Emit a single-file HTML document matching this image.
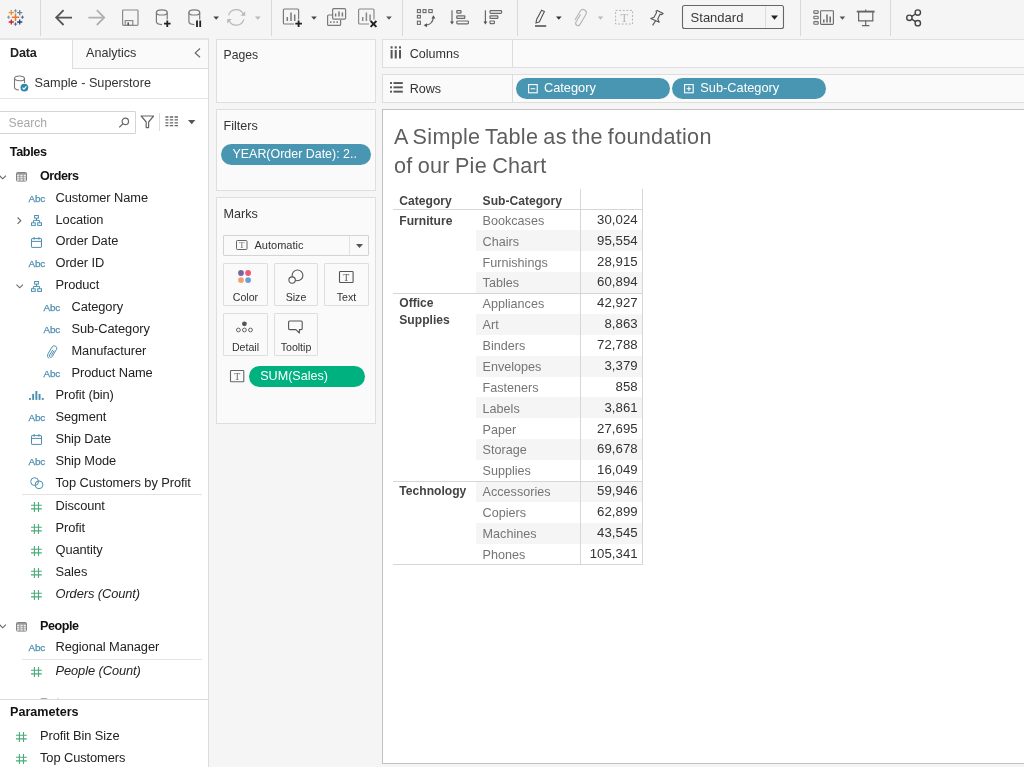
<!DOCTYPE html>
<html lang="en">
<head>
<meta charset="utf-8">
<title>Tableau - A Simple Table</title>
<style>
*{box-sizing:border-box;margin:0;padding:0}
html,body{width:1024px;height:767px;overflow:hidden;background:#f5f5f5;font-family:"Liberation Sans",sans-serif;color:#333;font-size:13px}
.abs{position:absolute}
#app{position:relative;width:1024px;height:767px;overflow:hidden;will-change:transform}
.card{position:absolute;background:#fafafa;border:1px solid #dedede}
.t{position:absolute;white-space:nowrap;line-height:16px}
.pill{position:absolute;border-radius:10px;color:#fff;font-size:13px;line-height:20px;height:20px;white-space:nowrap;overflow:hidden}
.blue{background:#4996b2}
.green{background:#00b180}
svg{position:absolute;overflow:visible}
.vsep{position:absolute;width:1px;background:#dcdcdc;top:0;height:36px}
/* data pane */
#pane{position:absolute;left:0;top:38px;width:209px;height:729px;background:#fff;border-right:1px solid #dcdcdc;border-top:2px solid #e6e6e6}
.f{position:absolute;white-space:nowrap;color:#222}
.f.i{font-style:italic}
.f.l2{left:71px}
.abc{position:absolute;color:#4e8fb0;letter-spacing:-0.200px;-webkit-text-stroke:0.250px #4e8fb0}
.hsep{position:absolute;height:1px;background:#e3e3e3}
/* table */
.th{position:absolute;font-size:12px;font-weight:bold;color:#333;line-height:14px;white-space:nowrap}
.sc{position:absolute;left:482px;font-size:12.5px;color:#777;line-height:14px;white-space:nowrap}
.val{position:absolute;right:386px;font-size:12.5px;color:#333;line-height:14px;white-space:nowrap;text-align:right}
.band{position:absolute;left:476px;width:166px;height:21px;background:#f5f5f5}

.lab{font-size:12.200px;color:#333}
.mbtn{position:absolute;height:43px;border:1px solid #dedede;border-radius:1px;background:#fafafa}
.mbtn span{position:absolute;left:0;width:100%;text-align:center;top:26.500px;font-size:10.600px;line-height:13px;color:#333}
.title{color:#5e5e5e;letter-spacing:0.300px;word-spacing:-1.200px}
</style>
</head>
<body>
<div id="app">
<!-- TOOLBAR -->
<div id="toolbar" class="abs" style="left:0;top:0;width:1024px;height:39px;background:#f5f5f5">
<svg id="tb" width="1024" height="39" viewBox="0 0 1024 39" style="left:0;top:0" fill="none" stroke-linecap="butt">
<g stroke="#d9d9d9" stroke-width="1">
<path d="M40.5 0V36M271.5 0V36M402.5 0V36M517.5 0V36M800.5 0V36M890.5 0V36"/>
</g>
<!-- logo -->
<g stroke-width="1.3">
<path d="M15.5 13.5v7.4M11.8 17.2h7.4" stroke="#e8762d" stroke-width="1.5"/>
<path d="M11.3 10v5.2M8.7 12.6h5.2" stroke="#eb912c"/>
<path d="M19.7 10v5.2M17.1 12.6h5.2" stroke="#59879b"/>
<path d="M11.3 19.4v5.2M8.7 22h5.2" stroke="#c72035"/>
<path d="M19.7 19.4v5.2M17.1 22h5.2" stroke="#1f447e"/>
<path d="M15.5 9.2v3.4M13.8 10.9h3.4" stroke="#7099a6" stroke-width="1"/>
<path d="M15.5 22.4v3.4M13.8 24.1h3.400" stroke="#5c6692" stroke-width="1"/>
<path d="M8.6 15.6v3.2M7 17.2h3.200" stroke="#7099a6" stroke-width="1"/>
<path d="M22.4 15.6v3.200M20.800 17.2h3.200" stroke="#5c6692" stroke-width="1"/>
</g>
<!-- back / forward -->
<path d="M72 17.6H56.400M63.600 10.200L56.200 17.600L63.600 25" stroke="#555" stroke-width="1.800"/>
<path d="M88.400 17.600H104M96.800 10.200L104.200 17.600L96.800 25" stroke="#b0b0b0" stroke-width="1.800"/>
<!-- save -->
<g stroke="#8a8a8a" stroke-width="1.200">
<rect x="122.600" y="10" width="15.400" height="15.400" rx="0.800"/>
<rect x="125.200" y="20.600" width="7.600" height="4.800"/>
<rect x="127.400" y="22.400" width="1.600" height="3" fill="#555" stroke="none"/>
</g>
<!-- db plus -->
<g stroke="#7a7a7a" stroke-width="1.200">
<ellipse cx="161.800" cy="12.400" rx="5.400" ry="2.600"/>
<path d="M156.400 12.400V21.800C156.400 23.200 158.400 24.400 162 24.600M167.200 12.400V19.600"/>
<path d="M167.300 20.400v6.600M164 23.700h6.600" stroke="#222" stroke-width="1.800"/>
</g>
<!-- db pause -->
<g stroke="#7a7a7a" stroke-width="1.200">
<ellipse cx="194.300" cy="12.400" rx="5.400" ry="2.600"/>
<path d="M188.900 12.400V21.800C188.900 23.200 190.900 24.400 194.300 24.600M199.700 12.400V19.600"/>
<path d="M197 20.600v6.400M200.200 20.600v6.400" stroke="#222" stroke-width="1.800"/>
</g>
<path d="M213.400 16.600h5.600l-2.800 3.200z" fill="#444" stroke="none"/>
<!-- refresh -->
<g stroke="#b9b9b9" stroke-width="1.200">
<path d="M228.600 15.400A7.800 7.800 0 0 1 243.400 14.600M243.800 19.400A7.800 7.800 0 0 1 229 20.200"/>
<path d="M245.200 11.200v4.600h-4.600zM227.200 23.600v-4.600h4.600z" fill="#b9b9b9" stroke="none"/>
</g>
<path d="M255 16.600h5.600l-2.800 3.200z" fill="#b9b9b9" stroke="none"/>
<!-- new worksheet -->
<g stroke="#7a7a7a" stroke-width="1.200">
<path d="M294 24H284.400a1 1 0 0 1-1-1V10a1 1 0 0 1 1-1H297.600a1 1 0 0 1 1 1V19.600"/>
<path d="M287.300 17v4M291 12.600v8.400M294.700 14.600v6.400" stroke-width="1.500"/>
<path d="M298.600 20.400v6.600M295.300 23.700h6.600" stroke="#222" stroke-width="1.800"/>
</g>
<path d="M311.200 16.600h5.600l-2.800 3.200z" fill="#444" stroke="none"/>
<!-- duplicate -->
<g stroke="#7a7a7a" stroke-width="1.200">
<path d="M332 15H328.600a1 1 0 0 0-1 1V24.400a1 1 0 0 0 1 1H339.600a1 1 0 0 0 1-1V20"/>
<rect x="332.600" y="8.700" width="13" height="10.400" rx="1"/>
<path d="M335.600 13.600v3M339 11.400v5.200M342.400 12.600v4" stroke-width="1.500"/>
<path d="M330.800 21.200v1.800M334 21.200v1.800M337.200 21.200v1.800" stroke-width="1.400"/>
</g>
<!-- clear sheet -->
<g stroke="#8a8a8a" stroke-width="1.200">
<path d="M369 24H359.600a1 1 0 0 1-1-1V10a1 1 0 0 1 1-1H373a1 1 0 0 1 1 1V19.600"/>
<path d="M362.700 17v4M366.400 12.600v8.400M370.100 14.600v6.400" stroke-width="1.500"/>
<path d="M370.600 21l5.800 5.800M376.400 21l-5.800 5.800" stroke="#222" stroke-width="1.900"/>
</g>
<path d="M386.200 16.600h5.600l-2.800 3.200z" fill="#555" stroke="none"/>
<!-- swap -->
<g stroke="#6a6a6a" stroke-width="1.100">
<rect x="417.400" y="9.600" width="3" height="3"/><rect x="423" y="9.600" width="3" height="3"/><rect x="428.800" y="9.600" width="3.400" height="3"/>
<rect x="417.400" y="15.400" width="3" height="2.600"/><rect x="417.400" y="21.200" width="3" height="3.200"/>
<path d="M425.400 25.200C430 24.800 433 21.600 433.400 17.200" stroke-width="1.300"/>
<path d="M423.600 25.200l3.400-2v4zM433.400 15.200l-2 3.400h4z" fill="#555" stroke="none"/>
</g>
<!-- sort asc -->
<g stroke="#6a6a6a" stroke-width="1.200">
<path d="M452 10.200V22.600"/><path d="M450 21.400h4l-2 3.200z" fill="#555" stroke="none"/>
<rect x="456.800" y="10.600" width="4.200" height="2.600" rx="0.500"/>
<rect x="456.800" y="15.800" width="8" height="2.600" rx="0.500"/>
<rect x="456.800" y="21" width="11.600" height="2.800" rx="0.800"/>
</g>
<!-- sort desc -->
<g stroke="#6a6a6a" stroke-width="1.200">
<path d="M485.400 10.200V22.600"/><path d="M483.400 21.400h4l-2 3.200z" fill="#555" stroke="none"/>
<rect x="490" y="10.600" width="11.600" height="2.800" rx="0.800"/>
<rect x="490" y="15.800" width="7.800" height="2.600" rx="0.500"/>
<rect x="490" y="21" width="4.400" height="2.600" rx="0.500"/>
</g>
<!-- highlighter -->
<g stroke="#555" stroke-width="1.100">
<path d="M541.600 10.200l2.800 1.400-5 10.200-3.400 1.200 0.600-3.600z"/>
<path d="M535 26h11.200" stroke-width="1.600"/>
</g>
<path d="M556 16.600h5.600l-2.800 3.200z" fill="#333" stroke="none"/>
<!-- paperclip -->
<g stroke="#b5b5b5" stroke-width="1.100">
<path d="M580.600 14.400l-4.600 7.600a2.300 2.300 0 0 0 4 2.400l6-10.200a3.300 3.300 0 0 0-5.600-3.400l-5.400 9.200"/>
</g>
<path d="M597.800 16.600h5.400l-2.700 3.200z" fill="#b9b9b9" stroke="none"/>
<!-- T dashed -->
<rect x="615.600" y="10.400" width="17" height="13.600" stroke="#b5b5b5" stroke-width="1" stroke-dasharray="2 1.600"/>
<text x="624.200" y="21.600" font-family="Liberation Serif,serif" font-size="12.500" fill="#b5b5b5" stroke="none" text-anchor="middle">T</text>
<!-- pin -->
<g stroke="#555" stroke-width="1.100" stroke-linejoin="round">
<path d="M657.200 10.400l6 3-1.400 1.200-1.800-0.400-2.200 4.800 1.400 3.200-8.400-3.600 3.200-1.400 2.600-4.600-0.600-1.400z"/>
<path d="M655.600 20.800l-3 4.600"/>
</g>
<!-- Standard box -->
<rect x="682.500" y="5.500" width="101" height="23" rx="2" fill="#f5f5f5" stroke="#666" stroke-width="1.100"/>
<path d="M765.500 6.500v21" stroke="#dcdcdc" stroke-width="1"/>
<text x="690.600" y="21.800" font-family="Liberation Sans,sans-serif" font-size="13" fill="#3a3a3a" stroke="none">Standard</text>
<path d="M771 15.600h7l-3.500 4.200z" fill="#222" stroke="none"/>
<!-- show me -->
<g stroke="#6a6a6a" stroke-width="1.100">
<rect x="813.800" y="10.800" width="4.400" height="2.600" rx="0.800"/><rect x="813.800" y="16.200" width="4.400" height="2.600" rx="0.800"/><rect x="813.800" y="21.600" width="4.400" height="2.600" rx="0.800"/>
<rect x="820.600" y="10.800" width="12.800" height="13.600" rx="0.800"/>
<path d="M823.800 19.600v3M827 14.400v8.200M830.200 16.400v6.200" stroke-width="1.500"/>
</g>
<path d="M839.600 16.600h5.600l-2.800 3.200z" fill="#555" stroke="none"/>
<!-- presentation -->
<g stroke="#666" stroke-width="1.200">
<path d="M856.800 11.600h17.800" stroke-width="1.900"/>
<path d="M865.700 9.400v2"/>
<path d="M858.600 12v8.800h14.200V12"/>
<path d="M865.700 20.800v4.600M862 25.600h7.400"/>
</g>
<!-- share -->
<g stroke="#444" stroke-width="1.400">
<circle cx="917.800" cy="12.600" r="2.700"/><circle cx="909.400" cy="17.800" r="2.700"/><circle cx="917.800" cy="23.200" r="2.700"/>
<path d="M911.800 16.400l3.700-2.400M911.800 19.200l3.700 2.500"/>
</g>
</svg>
</div>

<!-- DATA PANE -->
<div id="pane">
<div class="abs" style="left:72px;top:0;width:136px;height:28.7px;background:#fafafa;border-left:1px solid #dedede;border-bottom:1px solid #dedede"></div>
<span class="t" style="left:10px;top:4.634px;font-size:12.6px;line-height:16.0px;font-weight:bold;letter-spacing:-0.200px;color:#222">Data</span>
<span class="t" style="left:86px;top:4.634px;font-size:12.6px;line-height:16.0px;color:#333">Analytics</span>
<svg width="8" height="10" style="left:194px;top:8px" fill="none" stroke="#666" stroke-width="1.200"><path d="M6 0.500L1.200 4.900L6 9.300"/></svg>
<svg width="14" height="16" style="left:13px;top:35px" fill="none" stroke="#777" stroke-width="1.100"><ellipse cx="6.500" cy="3.400" rx="5" ry="2.400"/><path d="M1.500 3.400V12.600C1.500 13.800 3.200 14.800 6 15M11.500 3.400V8"/><circle cx="11.400" cy="12.600" r="3.900" fill="#2e86ab" stroke="none"/><path d="M9.500 12.700l1.400 1.400 2.500-2.800" stroke="#fff" stroke-width="1.100"/></svg>
<span class="t" style="left:34.6px;top:34.599000000000004px;font-size:12.7px;line-height:16.0px;color:#333">Sample - Superstore</span>
<div class="hsep" style="left:0;top:58.2px;width:208px;background:#e6e6e6"></div>
<div class="abs" style="left:-1px;top:70.5px;width:137px;height:23.500px;border:1px solid #d4d4d4;border-radius:1px;background:#fff"></div>
<span class="t" style="left:8.5px;top:74.773px;font-size:12.2px;line-height:16.0px;color:#a8a8a8">Search</span>
<svg width="12" height="12" style="left:118px;top:76.8px" fill="none" stroke="#666" stroke-width="1.200"><circle cx="7.300" cy="4.400" r="3.200"/><path d="M5 6.800L1.200 10.400"/></svg>
<svg width="16" height="14" style="left:140px;top:75.3px" fill="none" stroke="#666" stroke-width="1.200" stroke-linejoin="round"><path d="M1.200 1h12.400L8.600 7v5.600H6.200V7z"/></svg>
<div class="abs" style="left:159px;top:72.5px;width:1px;height:18px;background:#dcdcdc"></div>
<svg width="14" height="11" style="left:165px;top:76.4px" fill="none" stroke="#666" stroke-width="1.300"><path d="M0.400 1h3M4.800 1h3.400M9.600 1h3.400M0.400 3.900h3M4.800 3.900h3.400M9.600 3.900h3.400M0.400 6.800h3M4.800 6.800h3.400M9.600 6.800h3.400M0.400 9.700h3M4.800 9.700h3.400M9.600 9.700h3.400"/></svg>
<svg width="8" height="5" style="left:188px;top:79.7px"><path d="M0 0h7.400L3.700 4.200z" fill="#555"/></svg>
<span class="t" style="left:9.7px;top:103.63399999999999px;font-size:12.6px;line-height:16.0px;font-weight:bold;letter-spacing:-0.320px;color:#111">Tables</span>
<svg width="8" height="5" style="left:-1.5px;top:134.8px" fill="none" stroke="#666" stroke-width="1.100"><path d="M0.500 0.600L3.700 3.800L6.900 0.600"/></svg>
<svg width="11" height="10" style="left:15.5px;top:132px" fill="none" stroke="#777" stroke-width="0.900"><rect x="0.500" y="0.500" width="10" height="8.600" rx="0.800"/><path d="M0.500 2.700h10M0.500 4.800h10M0.500 6.900h10M3.800 2.700v6.400M7.200 2.700v6.400" stroke-width="0.700"/><path d="M0.500 1.500h10" stroke-width="1.100" stroke="#999"/></svg>
<span class="t" style="left:40px;top:127.63399999999999px;font-size:12.6px;line-height:16.0px;font-weight:bold;letter-spacing:-0.450px;color:#111">Orders</span>
<span class="abc" style="left:28.6px;top:152.57px;font-size:9.9px;line-height:12.0px;">Abc</span>
<span class="f" style="left:55.5px;top:149.547px;font-size:12.85px;line-height:16.0px;letter-spacing:-0.080px">Customer Name</span>
<svg width="11" height="11" style="left:31px;top:174.82px" fill="none" stroke="#4e8fb0" stroke-width="1"><rect x="3.600" y="0.500" width="3.800" height="2.600"/><rect x="0.500" y="7.800" width="3.800" height="2.600"/><rect x="6.700" y="7.800" width="3.800" height="2.600"/><path d="M5.500 3.100v2.300M2.400 7.800V5.400h6.200v2.400"/></svg>
<span class="f" style="left:55.5px;top:171.547px;font-size:12.85px;line-height:16.0px;letter-spacing:-0.080px">Location</span>
<svg width="5" height="8" style="left:17px;top:176.82000000000002px" fill="none" stroke="#666" stroke-width="1.100"><path d="M0.600 0.500L3.800 3.700L0.600 6.900"/></svg>
<svg width="11" height="11" style="left:31px;top:196.64px" fill="none" stroke="#4e8fb0" stroke-width="1"><rect x="0.500" y="1.600" width="10" height="8.800" rx="0.500"/><path d="M0.500 4.400h10M3.100 0v2.600M7.900 0v2.600"/></svg>
<span class="f" style="left:55.5px;top:192.547px;font-size:12.85px;line-height:16.0px;letter-spacing:-0.080px">Order Date</span>
<span class="abc" style="left:28.6px;top:217.57px;font-size:9.9px;line-height:12.0px;">Abc</span>
<span class="f" style="left:55.5px;top:214.547px;font-size:12.85px;line-height:16.0px;letter-spacing:-0.080px">Order ID</span>
<svg width="11" height="11" style="left:31px;top:240.58px" fill="none" stroke="#4e8fb0" stroke-width="1"><rect x="3.600" y="0.500" width="3.800" height="2.600"/><rect x="0.500" y="7.800" width="3.800" height="2.600"/><rect x="6.700" y="7.800" width="3.800" height="2.600"/><path d="M5.500 3.100v2.300M2.400 7.800V5.400h6.200v2.400"/></svg>
<span class="f" style="left:55.5px;top:236.54700000000003px;font-size:12.85px;line-height:16.0px;letter-spacing:-0.080px">Product</span>
<svg width="8" height="5" style="left:15.5px;top:244.28px" fill="none" stroke="#666" stroke-width="1.100"><path d="M0.500 0.600L3.700 3.800L6.900 0.600"/></svg>
<span class="abc" style="left:43.6px;top:261.57px;font-size:9.9px;line-height:12.0px;">Abc</span>
<span class="f" style="left:71.5px;top:258.547px;font-size:12.85px;line-height:16.0px;letter-spacing:-0.080px">Category</span>
<span class="abc" style="left:43.6px;top:283.57px;font-size:9.9px;line-height:12.0px;">Abc</span>
<span class="f" style="left:71.5px;top:280.547px;font-size:12.85px;line-height:16.0px;letter-spacing:-0.080px">Sub-Category</span>
<svg width="11" height="13" style="left:46.9px;top:305.54px" fill="none" stroke="#4e8fb0" stroke-width="1"><path d="M5.800 3.800l-3.200 5.200a1.500 1.500 0 0 0 2.600 1.600l4.200-7a2.500 2.500 0 0 0-4.300-2.600l-4.200 7a3.500 3.500 0 0 0 1 4.400"/><path d="M7.200 4.600l-3 5"/></svg>
<span class="f" style="left:71.5px;top:302.547px;font-size:12.85px;line-height:16.0px;letter-spacing:-0.080px">Manufacturer</span>
<span class="abc" style="left:43.6px;top:327.57px;font-size:9.9px;line-height:12.0px;">Abc</span>
<span class="f" style="left:71.5px;top:324.547px;font-size:12.85px;line-height:16.0px;letter-spacing:-0.080px">Product Name</span>
<svg width="15" height="9" style="left:28.8px;top:350.98px" fill="#4e8fb0"><rect x="0" y="7" width="1.900" height="1.900"/><rect x="3.200" y="2.900" width="1.900" height="6"/><rect x="6.400" y="0" width="1.900" height="8.900"/><rect x="9.600" y="2.900" width="1.900" height="6"/><rect x="12.800" y="7" width="1.900" height="1.900"/></svg>
<span class="f" style="left:55.5px;top:346.547px;font-size:12.85px;line-height:16.0px;letter-spacing:-0.080px">Profit (bin)</span>
<span class="abc" style="left:28.6px;top:371.57px;font-size:9.9px;line-height:12.0px;">Abc</span>
<span class="f" style="left:55.5px;top:368.547px;font-size:12.85px;line-height:16.0px;letter-spacing:-0.080px">Segment</span>
<svg width="11" height="11" style="left:31px;top:393.92px" fill="none" stroke="#4e8fb0" stroke-width="1"><rect x="0.500" y="1.600" width="10" height="8.800" rx="0.500"/><path d="M0.500 4.400h10M3.100 0v2.600M7.900 0v2.600"/></svg>
<span class="f" style="left:55.5px;top:390.547px;font-size:12.85px;line-height:16.0px;letter-spacing:-0.080px">Ship Date</span>
<span class="abc" style="left:28.6px;top:415.57px;font-size:9.9px;line-height:12.0px;">Abc</span>
<span class="f" style="left:55.5px;top:412.547px;font-size:12.85px;line-height:16.0px;letter-spacing:-0.080px">Ship Mode</span>
<svg width="14" height="13" style="left:29.5px;top:437.16px" fill="none" stroke="#4e8fb0" stroke-width="1"><circle cx="4.600" cy="4.600" r="3.900"/><circle cx="9" cy="7.800" r="3.900"/></svg>
<span class="f" style="left:55.5px;top:434.547px;font-size:12.85px;line-height:16.0px;letter-spacing:-0.080px">Top Customers by Profit</span>
<div class="hsep" style="left:22px;top:454px;width:180px"></div>
<svg width="11" height="10" style="left:31px;top:461.85px" fill="none" stroke="#4aab7b" stroke-width="1.100"><path d="M3.400 0v10M7.500 0v10M0 3.200h10.800M0 6.900h10.800"/></svg>
<span class="f" style="left:55.5px;top:457.547px;font-size:12.85px;line-height:16.0px;letter-spacing:-0.080px">Discount</span>
<svg width="11" height="10" style="left:31px;top:483.85px" fill="none" stroke="#4aab7b" stroke-width="1.100"><path d="M3.400 0v10M7.500 0v10M0 3.200h10.800M0 6.900h10.800"/></svg>
<span class="f" style="left:55.5px;top:479.547px;font-size:12.85px;line-height:16.0px;letter-spacing:-0.080px">Profit</span>
<svg width="11" height="10" style="left:31px;top:505.75px" fill="none" stroke="#4aab7b" stroke-width="1.100"><path d="M3.400 0v10M7.500 0v10M0 3.200h10.800M0 6.900h10.800"/></svg>
<span class="f" style="left:55.5px;top:501.547px;font-size:12.85px;line-height:16.0px;letter-spacing:-0.080px">Quantity</span>
<svg width="11" height="10" style="left:31px;top:527.65px" fill="none" stroke="#4aab7b" stroke-width="1.100"><path d="M3.400 0v10M7.500 0v10M0 3.200h10.800M0 6.900h10.800"/></svg>
<span class="f" style="left:55.5px;top:523.547px;font-size:12.85px;line-height:16.0px;letter-spacing:-0.080px">Sales</span>
<svg width="11" height="10" style="left:31px;top:549.60px" fill="none" stroke="#4aab7b" stroke-width="1.100"><path d="M3.400 0v10M7.500 0v10M0 3.200h10.800M0 6.900h10.800"/></svg>
<span class="f i" style="left:55.5px;top:545.547px;font-size:12.85px;line-height:16.0px;letter-spacing:-0.080px">Orders (Count)</span>
<svg width="8" height="5" style="left:-1.5px;top:584.4px" fill="none" stroke="#666" stroke-width="1.100"><path d="M0.500 0.600L3.700 3.800L6.900 0.600"/></svg>
<svg width="11" height="10" style="left:15.5px;top:581.6px" fill="none" stroke="#777" stroke-width="0.900"><rect x="0.500" y="0.500" width="10" height="8.600" rx="0.800"/><path d="M0.500 2.700h10M0.500 4.800h10M0.500 6.900h10M3.800 2.700v6.400M7.200 2.700v6.400" stroke-width="0.700"/><path d="M0.500 1.500h10" stroke-width="1.100" stroke="#999"/></svg>
<span class="t" style="left:40px;top:577.634px;font-size:12.6px;line-height:16.0px;font-weight:bold;letter-spacing:-0.450px;color:#111">People</span>
<span class="abc" style="left:28.6px;top:601.57px;font-size:9.9px;line-height:12.0px;">Abc</span>
<span class="f" style="left:55.5px;top:598.547px;font-size:12.85px;line-height:16.0px;letter-spacing:-0.080px">Regional Manager</span>
<div class="hsep" style="left:22px;top:619px;width:180px"></div>
<svg width="11" height="10" style="left:31px;top:626.60px" fill="none" stroke="#4aab7b" stroke-width="1.100"><path d="M3.400 0v10M7.500 0v10M0 3.200h10.800M0 6.900h10.800"/></svg>
<span class="f i" style="left:55.5px;top:622.547px;font-size:12.85px;line-height:16.0px;letter-spacing:-0.080px">People (Count)</span>
<div class="abs" style="left:0;top:657px;width:208px;height:2px;overflow:hidden"><span class="t" style="left:40px;top:-2px;font-weight:bold;font-size:12.600px;color:#aaa">Returns</span></div>
<div class="hsep" style="left:0;top:659px;width:208px;background:#dcdcdc"></div>
<span class="t" style="left:10px;top:663.634px;font-size:12.6px;line-height:16.0px;font-weight:bold;letter-spacing:0px;color:#111">Parameters</span>
<svg width="11" height="10" style="left:15.5px;top:691.60px" fill="none" stroke="#4aab7b" stroke-width="1.100"><path d="M3.400 0v10M7.500 0v10M0 3.200h10.800M0 6.900h10.800"/></svg>
<span class="f" style="left:40px;top:687.547px;font-size:12.85px;line-height:16.0px;letter-spacing:-0.080px">Profit Bin Size</span>
<svg width="11" height="10" style="left:15.5px;top:713.60px" fill="none" stroke="#4aab7b" stroke-width="1.100"><path d="M3.400 0v10M7.500 0v10M0 3.200h10.800M0 6.900h10.800"/></svg>
<span class="f" style="left:40px;top:709.547px;font-size:12.85px;line-height:16.0px;letter-spacing:-0.080px">Top Customers</span>
</div><!--/pane-->

<!-- CARDS -->
<div class="card" style="left:216px;top:39px;width:160px;height:64px;"></div>
<span class="t" style="left:223.5px;top:46.773px;font-size:12.2px;line-height:16.0px;color:#333">Pages</span>
<div class="card" style="left:216px;top:109px;width:160px;height:82px;"></div>
<span class="t" style="left:223.5px;top:117.634px;font-size:12.6px;line-height:16.0px;color:#333">Filters</span>
<div class="pill blue" style="left:221px;top:143.700px;width:149.800px;height:20.900px;border-radius:10.500px"></div>
<span class="t" style="left:232.5px;top:145.686px;font-size:12.45px;line-height:16.0px;color:#fff">YEAR(Order Date): 2..</span>
<div class="card" style="left:216px;top:197px;width:160px;height:227px;"></div>
<span class="t" style="left:223.5px;top:205.634px;font-size:12.6px;line-height:16.0px;color:#333">Marks</span>
<div class="abs" style="left:223px;top:235px;width:146px;height:21px;border:1px solid #d4d4d4;border-radius:1px;background:#fafafa"></div>
<div class="abs" style="left:349px;top:236px;width:1px;height:19px;background:#e2e2e2"></div>
<svg width="11.5" height="10" style="left:236px;top:239.7px" fill="none"><rect x="0.500" y="0.500" width="10.5" height="9" rx="0.800" stroke="#666" stroke-width="1"/><text x="5.75" y="8.42" font-family="Liberation Serif,serif" font-size="8.55" fill="#666" text-anchor="middle">T</text></svg>
<span class="t" style="left:254.5px;top:237.189px;font-size:11px;line-height:16.0px;color:#333">Automatic</span>
<svg width="8" height="5" style="left:355.500px;top:243.800px"><path d="M0 0h7L3.500 4.100z" fill="#555"/></svg>
<div class="mbtn" style="left:223px;top:263px;width:45px"><span>Color</span></div>
<div class="mbtn" style="left:274px;top:263px;width:44px"><span>Size</span></div>
<div class="mbtn" style="left:324px;top:263px;width:45px"><span>Text</span></div>
<div class="mbtn" style="left:223px;top:313px;width:45px"><span>Detail</span></div>
<div class="mbtn" style="left:274px;top:313px;width:44px"><span>Tooltip</span></div>
<svg width="14" height="14" style="left:237.900px;top:270.300px"><circle cx="3" cy="3" r="2.900" fill="#7e62a0"/><circle cx="10.100" cy="3" r="2.900" fill="#ee5a76"/><circle cx="3" cy="10.100" r="2.900" fill="#f0a06e"/><circle cx="10.100" cy="10.100" r="2.900" fill="#6b9fd0"/></svg>
<svg width="16" height="16" style="left:288px;top:269px" fill="none" stroke="#555" stroke-width="1.100"><circle cx="9.500" cy="6.400" r="5.400"/><circle cx="4.100" cy="11.100" r="3.200" fill="#fafafa"/></svg>
<svg width="14.6" height="12" style="left:338.5px;top:271px" fill="none"><rect x="0.500" y="0.500" width="13.6" height="11" rx="0.800" stroke="#555" stroke-width="1.1"/><text x="7.3" y="9.96" font-family="Liberation Serif,serif" font-size="9.9" fill="#555" text-anchor="middle">T</text></svg>
<svg width="16" height="12" style="left:236px;top:321px" fill="none" stroke="#555" stroke-width="0.900"><circle cx="8.400" cy="2.800" r="2.400" fill="#555" stroke="none"/><circle cx="2.400" cy="9" r="1.900"/><circle cx="8.400" cy="9" r="1.900"/><circle cx="14.500" cy="9" r="1.900"/></svg>
<svg width="16" height="14" style="left:288px;top:320px" fill="none" stroke="#555" stroke-width="1.100" stroke-linejoin="round"><path d="M1.600 1h11.600a1 1 0 0 1 1 1v6.600a1 1 0 0 1-1 1h-1.800v3.400l-3.600-3.400H1.600a1 1 0 0 1-1-1V2a1 1 0 0 1 1-1z"/></svg>
<svg width="14.3" height="12.2" style="left:230.3px;top:370.2px" fill="none"><rect x="0.500" y="0.500" width="13.3" height="11.2" rx="0.800" stroke="#666" stroke-width="1.1"/><text x="7.15" y="10.06" font-family="Liberation Serif,serif" font-size="9.9" fill="#666" text-anchor="middle">T</text></svg>
<div class="pill green" style="left:248.800px;top:365.700px;width:116px;height:20.900px;border-radius:10.500px"></div>
<span class="t" style="left:260.2px;top:367.634px;font-size:12.6px;line-height:16.0px;color:#fff">SUM(Sales)</span>
<div class="card" style="left:382px;top:39px;width:648px;height:29px;"></div>
<div class="card" style="left:382px;top:74px;width:648px;height:29px;"></div>
<div class="abs" style="left:512px;top:40px;width:1px;height:27px;background:#dcdcdc"></div>
<div class="abs" style="left:512px;top:75px;width:1px;height:27px;background:#dcdcdc"></div>
<svg width="12" height="13" style="left:390px;top:46px" fill="#555"><rect x="0.600" y="0.300" width="2" height="2.200"/><rect x="4.750" y="0.300" width="2" height="2.200"/><rect x="9" y="0.300" width="2" height="2.200"/><rect x="0.600" y="4" width="2" height="8.500"/><rect x="4.750" y="4" width="2" height="8.500"/><rect x="9" y="4" width="2" height="8.500"/></svg>
<span class="t" style="left:409.7px;top:45.651px;font-size:12.55px;line-height:16.0px;color:#333">Columns</span>
<svg width="13" height="11" style="left:389.500px;top:82.200px" fill="#555"><rect x="0" y="0.100" width="2" height="1.900"/><rect x="3.500" y="0.100" width="9.300" height="1.900"/><rect x="0" y="4.400" width="2" height="1.900"/><rect x="3.500" y="4.400" width="9.300" height="1.900"/><rect x="0" y="8.700" width="2" height="1.900"/><rect x="3.500" y="8.700" width="9.300" height="1.900"/></svg>
<span class="t" style="left:409.7px;top:80.651px;font-size:12.55px;line-height:16.0px;color:#333">Rows</span>
<div class="pill blue" style="left:515.600px;top:77.900px;width:154px;height:20.900px;border-radius:10.500px"><svg width="10" height="10" style="left:12.500px;top:5.800px" fill="none" stroke="#fff" stroke-width="1.100"><rect x="0.600" y="0.600" width="8.600" height="8.200"/><path d="M2.600 4.700h4.600"/></svg></div>
<span class="t" style="left:543.9px;top:79.565px;font-size:12.8px;line-height:16.0px;color:#fff">Category</span>
<div class="pill blue" style="left:672px;top:77.900px;width:154px;height:20.900px;border-radius:10.500px"><svg width="10" height="10" style="left:12.300px;top:5.800px" fill="none" stroke="#fff" stroke-width="1.100"><rect x="0.600" y="0.600" width="8.600" height="8.200"/><path d="M2.600 4.700h4.600M4.900 2.500v4.400"/></svg></div>
<span class="t" style="left:700.3px;top:79.565px;font-size:12.8px;line-height:16.0px;color:#fff">Sub-Category</span>
<div class="abs" id="view" style="left:382px;top:109px;width:650px;height:655px;background:#fff;border:1px solid #c2c2c2"></div>
<span class="t title" style="left:394px;top:121.516px;font-size:21.6px;line-height:30.0px;">A Simple Table as the foundation</span>
<span class="t title" style="left:394px;top:150.516px;font-size:21.6px;line-height:30.0px;">of our Pie Chart</span>
<div class="band" style="top:230px;height:21px"></div>
<div class="band" style="top:272px;height:21px"></div>
<div class="band" style="top:314px;height:21px"></div>
<div class="band" style="top:356px;height:21px"></div>
<div class="band" style="top:397px;height:21px"></div>
<div class="band" style="top:439px;height:21px"></div>
<div class="band" style="top:481px;height:21px"></div>
<div class="band" style="top:523px;height:21px"></div>
<span class="t" style="left:482.6px;top:212.634px;font-size:12.6px;line-height:16.0px;color:#757575">Bookcases</span>
<span class="t" style="right:386.300px;top:212.426px;font-size:13.200px;color:#333;letter-spacing:0.050px">30,024</span>
<span class="t" style="left:482.6px;top:233.634px;font-size:12.6px;line-height:16.0px;color:#757575">Chairs</span>
<span class="t" style="right:386.300px;top:233.426px;font-size:13.200px;color:#333;letter-spacing:0.050px">95,554</span>
<span class="t" style="left:482.6px;top:254.634px;font-size:12.6px;line-height:16.0px;color:#757575">Furnishings</span>
<span class="t" style="right:386.300px;top:254.426px;font-size:13.200px;color:#333;letter-spacing:0.050px">28,915</span>
<span class="t" style="left:482.6px;top:274.634px;font-size:12.6px;line-height:16.0px;color:#757575">Tables</span>
<span class="t" style="right:386.300px;top:274.426px;font-size:13.200px;color:#333;letter-spacing:0.050px">60,894</span>
<span class="t" style="left:482.6px;top:295.634px;font-size:12.6px;line-height:16.0px;color:#757575">Appliances</span>
<span class="t" style="right:386.300px;top:295.426px;font-size:13.200px;color:#333;letter-spacing:0.050px">42,927</span>
<span class="t" style="left:482.6px;top:316.634px;font-size:12.6px;line-height:16.0px;color:#757575">Art</span>
<span class="t" style="right:386.300px;top:316.426px;font-size:13.200px;color:#333;letter-spacing:0.050px">8,863</span>
<span class="t" style="left:482.6px;top:337.634px;font-size:12.6px;line-height:16.0px;color:#757575">Binders</span>
<span class="t" style="right:386.300px;top:337.426px;font-size:13.200px;color:#333;letter-spacing:0.050px">72,788</span>
<span class="t" style="left:482.6px;top:358.634px;font-size:12.6px;line-height:16.0px;color:#757575">Envelopes</span>
<span class="t" style="right:386.300px;top:358.426px;font-size:13.200px;color:#333;letter-spacing:0.050px">3,379</span>
<span class="t" style="left:482.6px;top:379.634px;font-size:12.6px;line-height:16.0px;color:#757575">Fasteners</span>
<span class="t" style="right:386.300px;top:379.426px;font-size:13.200px;color:#333;letter-spacing:0.050px">858</span>
<span class="t" style="left:482.6px;top:400.634px;font-size:12.6px;line-height:16.0px;color:#757575">Labels</span>
<span class="t" style="right:386.300px;top:400.426px;font-size:13.200px;color:#333;letter-spacing:0.050px">3,861</span>
<span class="t" style="left:482.6px;top:421.634px;font-size:12.6px;line-height:16.0px;color:#757575">Paper</span>
<span class="t" style="right:386.300px;top:421.426px;font-size:13.200px;color:#333;letter-spacing:0.050px">27,695</span>
<span class="t" style="left:482.6px;top:441.634px;font-size:12.6px;line-height:16.0px;color:#757575">Storage</span>
<span class="t" style="right:386.300px;top:441.426px;font-size:13.200px;color:#333;letter-spacing:0.050px">69,678</span>
<span class="t" style="left:482.6px;top:462.634px;font-size:12.6px;line-height:16.0px;color:#757575">Supplies</span>
<span class="t" style="right:386.300px;top:462.426px;font-size:13.200px;color:#333;letter-spacing:0.050px">16,049</span>
<span class="t" style="left:482.6px;top:483.634px;font-size:12.6px;line-height:16.0px;color:#757575">Accessories</span>
<span class="t" style="right:386.300px;top:483.426px;font-size:13.200px;color:#333;letter-spacing:0.050px">59,946</span>
<span class="t" style="left:482.6px;top:504.634px;font-size:12.6px;line-height:16.0px;color:#757575">Copiers</span>
<span class="t" style="right:386.300px;top:504.426px;font-size:13.200px;color:#333;letter-spacing:0.050px">62,899</span>
<span class="t" style="left:482.6px;top:525.634px;font-size:12.6px;line-height:16.0px;color:#757575">Machines</span>
<span class="t" style="right:386.300px;top:525.426px;font-size:13.200px;color:#333;letter-spacing:0.050px">43,545</span>
<span class="t" style="left:482.6px;top:546.634px;font-size:12.6px;line-height:16.0px;color:#757575">Phones</span>
<span class="t" style="right:386.300px;top:546.426px;font-size:13.200px;color:#333;letter-spacing:0.050px">105,341</span>
<div class="abs" style="left:393px;top:209px;width:250px;height:1px;background:#d6d6d6"></div>
<div class="abs" style="left:393px;top:293px;width:250px;height:1px;background:#d6d6d6"></div>
<div class="abs" style="left:393px;top:481px;width:250px;height:1px;background:#d6d6d6"></div>
<div class="abs" style="left:393px;top:564px;width:250px;height:1px;background:#d6d6d6"></div>
<div class="abs" style="left:580px;top:188.5px;width:1px;height:376.0px;background:#d6d6d6"></div>
<div class="abs" style="left:642px;top:188.5px;width:1px;height:376.0px;background:#d6d6d6"></div>
<span class="t" style="left:399.3px;top:192.807px;font-size:12.1px;line-height:16.0px;font-weight:bold;color:#444">Category</span>
<span class="t" style="left:482.6px;top:192.807px;font-size:12.1px;line-height:16.0px;font-weight:bold;color:#444">Sub-Category</span>
<span class="t" style="left:399.3px;top:212.807px;font-size:12.1px;line-height:16.0px;font-weight:bold;color:#444">Furniture</span>
<span class="t" style="left:399.3px;top:294.807px;font-size:12.1px;line-height:16.0px;font-weight:bold;color:#444">Office</span>
<span class="t" style="left:399.3px;top:311.807px;font-size:12.1px;line-height:16.0px;font-weight:bold;color:#444">Supplies</span>
<span class="t" style="left:399.3px;top:482.807px;font-size:12.1px;line-height:16.0px;font-weight:bold;color:#444">Technology</span>
<!-- /MAIN -->
</div>
</body>
</html>
